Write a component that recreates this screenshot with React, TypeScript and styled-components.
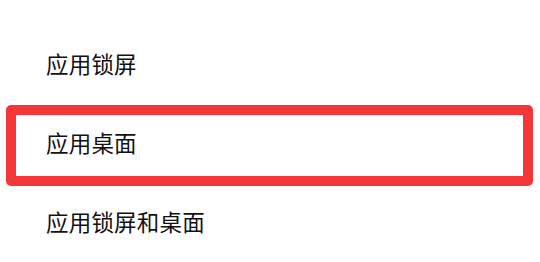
import React from 'react';
import styled, { createGlobalStyle } from 'styled-components';

const GlobalStyle = createGlobalStyle`
  html, body {
    margin: 0;
    padding: 0;
    background: #ffffff;
  }
  body {
    font-family: "Noto Sans CJK SC", "Noto Sans", sans-serif;
  }
`;

type Option = {
  label: string
  selected?: boolean
}

const options: Option[] = [
  { label: '应用锁屏' },
  { label: '应用桌面', selected: true },
  { label: '应用锁屏和桌面' },
];

const List = styled.div`
  width: 540px;
  height: 262px;
  padding-top: 27px;
  box-sizing: border-box;
  display: flex;
  flex-direction: column;
  overflow: hidden;
`;

const Row = styled.div<{ $selected?: boolean }>`
  flex-shrink: 0;
  box-sizing: border-box;
  display: flex;
  align-items: center;
  font-size: 22.5px;
  line-height: 1;
  color: #111111;
  letter-spacing: 0.2px;
  padding-bottom: 6px;
  padding-left: ${p => (p.$selected ? '30px' : '46px')};
  margin: ${p => (p.$selected ? '-1px 7px -1px 6px' : '0')};
  border: ${p => (p.$selected ? '10px solid #f43638' : 'none')};
  border-radius: ${p => (p.$selected ? '5px' : '0')};
  height: ${p => (p.$selected ? '81px' : '79px')};
`;

const App = () => (
  <>
    <GlobalStyle />
    <List>
      {options.map(o => (
        <Row key={o.label} $selected={o.selected}>
          {o.label}
        </Row>
      ))}
    </List>
  </>
);

export default App;
